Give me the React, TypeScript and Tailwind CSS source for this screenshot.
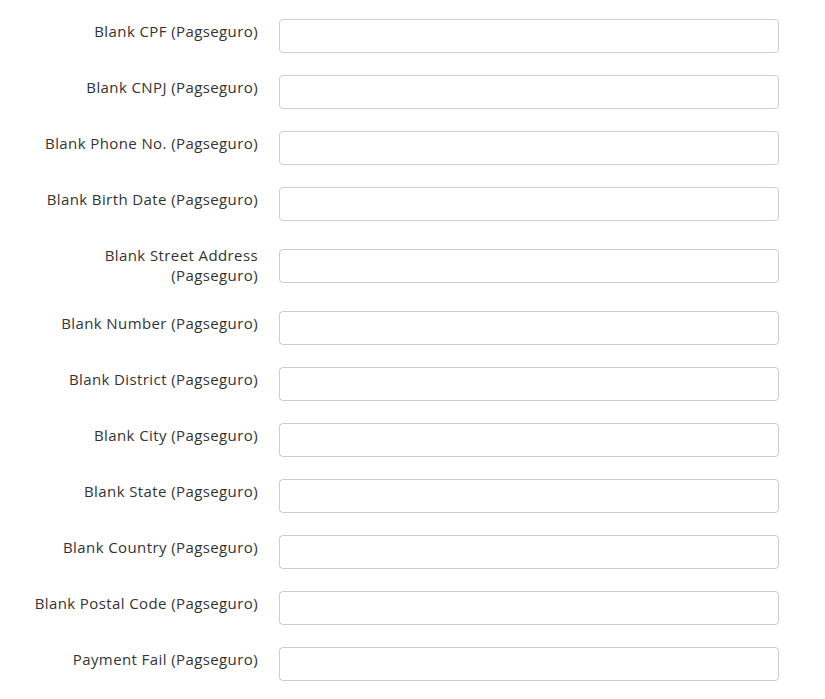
import React from "react";

const rows: { label: React.ReactNode; row?: string; lbl?: string; inp?: string }[] = [
  { label: "Blank CPF (Pagseguro)" },
  { label: "Blank CNPJ (Pagseguro)" },
  { label: "Blank Phone No. (Pagseguro)" },
  { label: "Blank Birth Date (Pagseguro)" },
  {
    label: (
      <>
        Blank Street Address
        <br />
        (Pagseguro)
      </>
    ),
    row: "mb-[25px]",
    lbl: "pt-[1.5px] pb-[1.5px]",
    inp: "mt-[6px]",
  },
  { label: "Blank Number (Pagseguro)" },
  { label: "Blank District (Pagseguro)" },
  { label: "Blank City (Pagseguro)" },
  { label: "Blank State (Pagseguro)" },
  { label: "Blank Country (Pagseguro)" },
  { label: "Blank Postal Code (Pagseguro)" },
  { label: "Payment Fail (Pagseguro)" },
];

export default function App() {
  return (
    <div className="w-[825px] h-[699px] bg-white pt-[19px] text-[15px] tracking-[0.4px] text-[#333333] overflow-hidden font-['Open_Sans','Noto_Sans',sans-serif]">
      {rows.map((r, i) => (
        <div key={i} className={`flex items-start ${r.row ?? "mb-[22px]"}`}>
          <label className={`w-[258px] shrink-0 text-right leading-5 ${r.lbl ?? "pt-[2px]"}`}>
            {r.label}
          </label>
          <input
            type="text"
            className={`ml-[21px] w-[500px] h-[34px] border border-[#cccccc] rounded-[4px] bg-white px-3 outline-none ${r.inp ?? ""}`}
          />
        </div>
      ))}
    </div>
  );
}
